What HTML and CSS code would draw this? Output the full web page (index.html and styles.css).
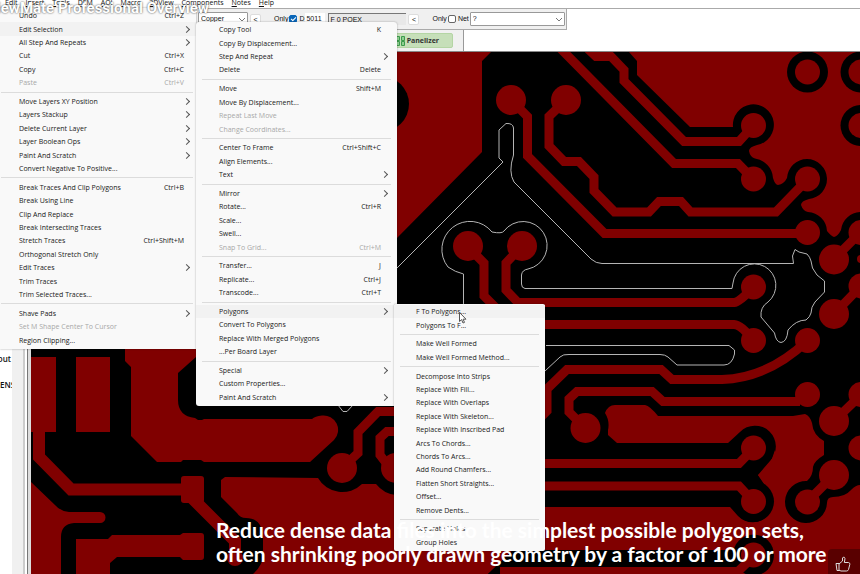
FILE: index.html
```
<!DOCTYPE html>
<html lang="en">
<head>
<meta charset="utf-8">
<title>ViewMate Professional Overview</title>
<link rel="stylesheet" href="styles.css">
</head>
<body>
<div class="app">
  <nav class="menubar">
    <a href="#">Edit</a><a href="#"><u>I</u>nsert</a><a href="#"><u>T</u>ools</a><a href="#"><u>D</u>FM</a><a href="#"><u>A</u>OI</a><a href="#"><u>M</u>acro</a><a href="#"><u>3</u>DView</a><a href="#"><u>C</u>omponents</a><a href="#"><u>N</u>otes</a><a href="#"><u>H</u>elp</a>
  </nav>
  <div class="bars">
    <div class="toolbar">
      <select class="layer" aria-label="Layer"><option>Copper</option></select>
      <button class="prev" aria-label="Previous layer">&lt;</button>
      <label class="check">Only<input type="checkbox" checked></label>
      <label class="dcode">D<input type="text" value="5011"></label>
      <input class="shape" type="text" value="F 0 POEX" aria-label="Shape" readonly>
      <button class="prev" aria-label="Previous shape">&lt;</button>
      <label class="check">Only<input type="checkbox"></label>
      <label class="net">Net<select><option>?</option></select></label>
    </div>
    <div class="tabs">
      <button class="panelizer">
        <svg viewBox="0 0 9 10" aria-hidden="true"><path d="M.5.5h3v4h-3zM5.500.5h3v4h-3zM.5 5.500h3v4h-3zM5.500 5.500h3v4h-3z"/></svg>
        Panelizer
      </button>
    </div>
  </div>
  <main class="work">
    <aside class="pane"><span class="tail">Layout</span><span>ENS</span></aside>
    <div class="splitter"></div>
    <svg class="board" viewBox="31 52 829 522" preserveAspectRatio="xMinYMin slice" role="img" aria-label="Board artwork">
      <g class="copper">
        <path d="M397 51H492L482 61V152L397 238Z"/>
        <path d="M629 51V52L637 61V75L690 127H733A20.500 20.500 0 1 1 757 145Q749 147 749 151Q750 157 755 158.500A21 21 0 0 1 773 178Q775 185 778 185Q784 184 787 178A20 20 0 1 1 809 199Q801 201 801 205Q803 211 808 212A20 20 0 0 1 827 231Q831 236 834 237Q838 236 841 230A20 20 0 0 1 861 212V51Z"/>
        <path d="M125 349V361L131 367V436L157 462H181L183 460H201L204 462H310L334 440A14.500 14.500 0 0 0 322 415.500Q315 416 312 419H204L202 420H198L195 418Q178 416 178 400V373L196 357V349Z"/>
        <path d="M31 357H56V432H31ZM76 357H110V432H76Z"/>
        <rect x="181" y="476" width="23" height="27" rx="3"/>
        <path d="M31 482L55 505Q60 511 69 512H100A5.500 5.500 0 0 1 100 523H74Q61 524 61 537V574H31Z"/>
        <path d="M76 539H108L112 535H180L183 533H201Q204 533 204 536V557Q204 560 201 560H183L180 557H117L110 563V574H76Z"/>
        <path d="M221 480L225 477L318 478A28 28 0 0 0 362 484H376Q384 494 396 495H410V507H730L738 516A20 20 0 0 0 768 515V490L758 475L770 461A20 20 0 0 0 740 432L728 443H617L608 435V430Q610 421 605 413Q608 405 615 405H645Q650 406 658 416H793L805 414Q810 416 812 423Q813 435 824 441V455Q814 461 813 467Q813 476 807 481A21 21 0 1 0 827 503Q827 497 833 497Q845 497 851 490Q856 485 860 485V574H735V550H513L488 574H253Q263 565 263 555V535Q261 518 246 518Q240 518 237 513L221 497Z"/>
        <path d="M768 470L758 475L768 488L775 500V450Z"/>
      </g>
      <g class="gap">
        <circle cx="381" cy="104" r="28"/>
        <circle cx="807.500" cy="72" r="20.500"/>
        <circle cx="861" cy="72" r="20.500"/>
        <circle cx="861" cy="125.500" r="20.500"/>
        <circle cx="753.500" cy="448" r="20.500"/>
        <circle cx="753.500" cy="501.500" r="20.500"/>
        <circle cx="753.500" cy="555" r="20.500"/>
        <path d="M513 550H742V574H488Z"/>
      </g>
      <g class="trace">
        <path d="M511 100L527.500 116.500V156L604.500 233.500H807"/>
        <path d="M566 100L549 116.500V146L564 161.500H579L594 177V191L614.500 212H649L659 201.500H681L690.500 212H776L807 180"/>
        <path d="M560 48L674 163.500H738L753 179"/>
        <path d="M588 49L596 56.500H611L624 70V81L684 141.500H739L753 126"/>
        <path d="M834 259L861 232M834 314L861 286M834 421L861 395M834 475L807 502"/>
        <path d="M467 246L484 263V296L500 312M522 246L506 263V290L518 302.500H734Q740 302 753 287"/>
        <path d="M540 324.500H734Q742 325 753 341"/>
        <path d="M535 423L547 411V389L567 369.500H661L672 379.500H722Q768 378 807 341"/>
        <path d="M585 428V428L569 412V399L577 391.500H652L663 401.500H800"/>
        <path d="M540 463.500H739L753 449M540 486H739L753 501M500 571.500H738L753 557"/>
        <path d="M342 468L358 453V432L378 411.500H400M390 468L380 455V438L387 431.500H400"/>
        <path class="wide" d="M39 430V457L71 489.500H186M188 494L235 541V558"/>
      </g>
      <g class="copper">
        <circle cx="807.500" cy="72" r="12.500"/><circle cx="861" cy="72" r="12.500"/><circle cx="861" cy="125.500" r="12.500"/>
        <circle cx="511" cy="100" r="15"/><circle cx="566" cy="100" r="15"/>
        <circle cx="468" cy="246" r="15"/><circle cx="522" cy="246" r="15"/>
        <circle cx="753.500" cy="125.500" r="12.500"/><circle cx="753.500" cy="179" r="12.500"/>
        <circle cx="807.500" cy="179" r="12.500"/><circle cx="807.500" cy="232.500" r="12.500"/>
        <circle cx="861" cy="232.500" r="12.500"/><circle cx="861" cy="286" r="12.500"/><circle cx="861" cy="259" r="4"/>
        <circle cx="834" cy="259.500" r="15"/><circle cx="834" cy="314" r="15"/>
        <circle cx="753.500" cy="287" r="12.500"/><circle cx="753.500" cy="340.500" r="12.500"/><circle cx="807.500" cy="340.500" r="12.500"/>
        <circle cx="807.500" cy="394.500" r="12.500"/><circle cx="861" cy="394.500" r="12.500"/><circle cx="861" cy="448" r="12.500"/>
        <circle cx="834" cy="421" r="15"/><circle cx="834" cy="475" r="15"/><circle cx="807.500" cy="502" r="12.500"/>
        <circle cx="585.500" cy="428" r="15"/>
        <circle cx="753.500" cy="448" r="12.500"/><circle cx="753.500" cy="501.500" r="12.500"/><circle cx="753.500" cy="555" r="12.500"/>
        <circle cx="342" cy="468" r="15"/><circle cx="396" cy="468" r="15"/><circle cx="235" cy="558" r="8"/>
      </g>
      <g class="outline">
        <path d="M397 268L503 162L499 158V130L506 123.500Q513 123 513.500 128V155Q508 172 514 182L591 259Q596 263.500 602 263.500H793.500L792.500 256L795 249.500L799 252L807 254Q810 257 811 261Q811 268 817 275L824.500 281V292L815 302Q811 307 811 313Q810 317 806 320Q796 320 788 330Q787 342 781 342.500Q776 342 774.500 333L761 317Q760 307 768 302A21.500 21.500 0 1 0 733 283L732 288.500H525Q521.500 288 521.500 284V275Q522 270 528 269A24 24 0 1 0 504 231Q502 234 492 232A27 27 0 1 0 448 267Q455 272 463.500 274V306"/>
        <path d="M546 345.500H729L734.500 350V354Q732 365 724 365H677L668 357Q665 354.500 660 354.500H569Q563 354 560 357L545 371"/>
        <path d="M338 405L343 411.500H347L353 405"/>
      </g>
    </svg>
  </main>
</div>

<ul class="menu edit-menu">
  <li><button>Undo<kbd>Ctrl+Z</kbd></button></li>
  <li><button class="sub active">Edit Selection</button></li>
  <li><button class="sub">All Step And Repeats</button></li>
  <li><button>Cut<kbd>Ctrl+X</kbd></button></li>
  <li><button>Copy<kbd>Ctrl+C</kbd></button></li>
  <li><button disabled>Paste<kbd>Ctrl+V</kbd></button></li>
  <li class="sep"></li>
  <li><button class="sub">Move Layers XY Position</button></li>
  <li><button class="sub">Layers Stackup</button></li>
  <li><button class="sub">Delete Current Layer</button></li>
  <li><button class="sub">Layer Boolean Ops</button></li>
  <li><button class="sub">Paint And Scratch</button></li>
  <li><button>Convert Negative To Positive...</button></li>
  <li class="sep"></li>
  <li><button>Break Traces And Clip Polygons<kbd>Ctrl+B</kbd></button></li>
  <li><button>Break Using Line</button></li>
  <li><button>Clip And Replace</button></li>
  <li><button>Break Intersecting Traces</button></li>
  <li><button>Stretch Traces<kbd>Ctrl+Shift+M</kbd></button></li>
  <li><button>Orthogonal Stretch Only</button></li>
  <li><button class="sub">Edit Traces</button></li>
  <li><button>Trim Traces</button></li>
  <li><button>Trim Selected Traces...</button></li>
  <li class="sep"></li>
  <li><button class="sub">Shave Pads</button></li>
  <li><button disabled>Set M Shape Center To Cursor</button></li>
  <li><button>Region Clipping...</button></li>
</ul>

<ul class="menu selection-menu">
  <li><button>Copy Tool<kbd>K</kbd></button></li>
  <li><button>Copy By Displacement...</button></li>
  <li><button class="sub">Step And Repeat</button></li>
  <li><button>Delete<kbd>Delete</kbd></button></li>
  <li class="sep"></li>
  <li><button>Move<kbd>Shift+M</kbd></button></li>
  <li><button>Move By Displacement...</button></li>
  <li><button disabled>Repeat Last Move</button></li>
  <li><button disabled>Change Coordinates...</button></li>
  <li class="sep"></li>
  <li><button>Center To Frame<kbd>Ctrl+Shift+C</kbd></button></li>
  <li><button>Align Elements...</button></li>
  <li><button class="sub">Text</button></li>
  <li class="sep"></li>
  <li><button class="sub">Mirror</button></li>
  <li><button>Rotate...<kbd>Ctrl+R</kbd></button></li>
  <li><button>Scale...</button></li>
  <li><button>Swell...</button></li>
  <li><button disabled>Snap To Grid...<kbd>Ctrl+M</kbd></button></li>
  <li class="sep"></li>
  <li><button>Transfer...<kbd>J</kbd></button></li>
  <li><button>Replicate...<kbd>Ctrl+J</kbd></button></li>
  <li><button>Transcode...<kbd>Ctrl+T</kbd></button></li>
  <li class="sep"></li>
  <li><button class="sub active">Polygons</button></li>
  <li><button>Convert To Polygons</button></li>
  <li><button>Replace With Merged Polygons</button></li>
  <li><button>...Per Board Layer</button></li>
  <li class="sep"></li>
  <li><button class="sub">Special</button></li>
  <li><button>Custom Properties...</button></li>
  <li><button class="sub">Paint And Scratch</button></li>
</ul>

<ul class="menu polygon-menu">
  <li><button class="active">F To Polygons...</button></li>
  <li><button>Polygons To F...</button></li>
  <li class="sep"></li>
  <li><button>Make Well Formed</button></li>
  <li><button>Make Well Formed Method...</button></li>
  <li class="sep"></li>
  <li><button>Decompose Into Strips</button></li>
  <li><button>Replace With Fill...</button></li>
  <li><button>Replace With Overlaps</button></li>
  <li><button>Replace With Skeleton...</button></li>
  <li><button>Replace With Inscribed Pad</button></li>
  <li><button>Arcs To Chords...</button></li>
  <li><button>Chords To Arcs...</button></li>
  <li><button>Add Round Chamfers...</button></li>
  <li><button>Flatten Short Straights...</button></li>
  <li><button>Offset...</button></li>
  <li><button>Remove Dents...</button></li>
  <li class="sep"></li>
  <li><button>Separate Holes</button></li>
  <li><button>Group Holes</button></li>
</ul>

<svg class="cursor" viewBox="0 0 8 12" aria-hidden="true"><path d="M.5.5V9.500L2.600 7.600L4 11L5.500 10.400L4.100 7.200H7Z"/></svg>
<h1 class="video-title">ViewMate Professional Overview</h1>
<p class="caption">Reduce dense data files into the simplest possible polygon sets,<br>often shrinking poorly drawn geometry by a factor of 100 or more</p>
<button class="like" aria-label="Like"><svg viewBox="0 0 16 16"><path d="M1 7.500H4V14.500H2ZM4 8L7.500 5V2Q8 .8 9.300 1.300Q10.300 2 9.800 4L9.300 6.500H13.500Q15.300 7 14.800 8.500L13.500 13.500Q13 15 11.500 15H6L4 14.200"/></svg></button>
</body>
</html>
```
FILE: styles.css
```
* { box-sizing: border-box; }

body {
  margin: 0;
  height: 100vh;
  overflow: hidden;
  background: #fff;
  color: #181818;
  font: 7px/13px "Open Sans", "Noto Sans", sans-serif;
}

button, input, select { font: inherit; color: inherit; margin: 0; }

.app { display: flex; flex-direction: column; height: 100%; }

.menubar {
  display: flex;
  align-items: flex-end;
  gap: 8px;
  height: 9px;
  padding-left: 5px;
  border-bottom: 1px solid #aaa;
  background: #fff;
}
.menubar a { color: #111; text-decoration: none; line-height: 10px; }

.bars { display: flex; flex-direction: column; align-items: flex-start; border-bottom: 1px solid #888; }

.toolbar {
  display: flex;
  align-items: center;
  height: 21px;
  padding: 0 1px 0 198px;
  background: #f0f0f0;
  border-right: 1px solid #aaa;
  border-bottom: 1px solid #aaa;
  font: 7px/12px "Liberation Sans", sans-serif;
  color: #111;
}
.toolbar select {
  appearance: none;
  height: 14px;
  padding: 0 2px;
  border: 1px solid #999;
  border-radius: 1px;
  background-color: #fff;
  background-image: linear-gradient(45deg, transparent 45%, #777 45% 60%, transparent 60%), linear-gradient(-45deg, transparent 45%, #777 45% 60%, transparent 60%);
  background-size: 3px 3px;
  background-position: right 5px center, right 2px center;
  background-repeat: no-repeat;
}
.toolbar .layer { width: 50px; }
.toolbar .prev {
  width: 11px;
  height: 11px;
  margin: 0 2px;
  padding: 0;
  border: 1px solid #ddd;
  border-radius: 2px;
  background: #fff;
  line-height: 9px;
}
.check, .dcode, .net { display: flex; align-items: center; gap: 1px; }
.check { margin-left: 11px; }
.check input {
  appearance: none;
  width: 8px;
  height: 8px;
  border: 1px solid #666;
  border-radius: 2px;
  background: #fff;
}
.check input:checked { background: #0a66b8; border-color: #0a66b8; }
.check input:checked::after {
  content: "";
  display: block;
  width: 4px;
  height: 2px;
  margin: 1px;
  border: solid #fff;
  border-width: 0 0 1px 1px;
  transform: rotate(-45deg);
}
.dcode { margin-left: 2px; }
.dcode input { width: 20px; height: 12px; padding: 0 1px; border: 0; background: #fff; }
.shape { width: 78px; height: 12px; margin-left: 3px; padding: 0 1px; border: 1px solid #777; border-width: 1px 0 0 1px; background: #e8e8e8; }
.net { margin-left: 2px; }
.net select { width: 95px; }

.tabs {
  display: flex;
  justify-content: flex-end;
  align-items: center;
  width: 464px;
  height: 21px;
  padding-right: 10px;
  background: #f0f0f0;
  border-right: 1px solid #999;
}
.panelizer {
  display: flex;
  align-items: center;
  gap: 2px;
  height: 15px;
  padding: 0 13px 0 7px;
  border: 1px solid #b4d5a4;
  border-radius: 2px;
  background: #c6dfb9;
  font-weight: 700;
  color: #333;
}
.panelizer svg { width: 9px; height: 10px; fill: #8fce91; stroke: #3c9a4c; }

.work { display: flex; flex: 1; min-height: 0; }
.pane {
  display: flex;
  flex-direction: column;
  gap: 13px;
  width: 12px;
  padding: 300px 1px 0 0;
  overflow: hidden;
  background: #fff;
  color: #111;
  font: 600 8px/13px "Open Sans", sans-serif;
}
.pane .tail { align-self: flex-end; }
.splitter { width: 19px; background: #fff; border-left: 11px solid #f0f0f0; border-right: 3px solid #ddd; box-shadow: inset -1px 0 #777, inset 2px 0 #ccc; }
.board { flex: 1; min-width: 0; height: 100%; background: #000; }
.copper { fill: #800000; }
.gap { fill: #000; }
.trace { fill: none; stroke: #800000; stroke-width: 9; }
.trace .wide { stroke-width: 12; }
.outline { fill: none; stroke: #b4b4b4; stroke-width: 1; }

/* Drop-down menus lie over the board; rows and separators share the height 5:2 */
.menu {
  position: absolute;
  display: flex;
  flex-direction: column;
  margin: 0;
  padding: 1px 0 2px;
  list-style: none;
  background: #f9f9f9;
  box-shadow: 0 0 2px rgba(0, 0, 0, .35);
}
.menu li { display: flex; flex: 5 1 0; min-height: 0; }
.menu .sep { flex-grow: 2; align-items: center; padding: 0 3px 0 1px; }
.menu .sep::before { content: ""; flex: 1; height: 1px; background: #dcdcdc; }
.menu button {
  display: flex;
  flex: 1;
  align-items: center;
  justify-content: space-between;
  padding: 0 12px 0 19px;
  border: 0;
  background: none;
  line-height: 13px;
  white-space: nowrap;
}
.menu .active { background: #f2f2f2; }
.menu button:disabled { color: #a8a8a8; }
.menu kbd { font: inherit; }
.menu .sub { padding-right: 7px; }
.menu .sub::after {
  content: "";
  width: 4px;
  height: 4px;
  border: solid #555;
  border-width: 1px 1px 0 0;
  transform: rotate(45deg);
}
.edit-menu { left: 0; top: 8px; width: 196px; height: 341px; }
.selection-menu { left: 196px; top: 22px; width: 201px; height: 384px; border-radius: 3px; }
.selection-menu button { padding: 0 16px 0 23px; }
.selection-menu .sub { padding-right: 10px; }
.selection-menu .sep { padding: 0 6px; }
.polygon-menu { left: 394px; top: 304px; width: 151px; height: 247px; border-radius: 2px; }
.polygon-menu button { padding: 0 5px 0 22px; }
.polygon-menu .sep { padding: 0 6px; }

.cursor { position: absolute; left: 459px; top: 312px; width: 8px; height: 12px; fill: #fff; stroke: #555; stroke-width: 1; }

.video-title {
  position: absolute;
  left: -13px;
  top: -1px;
  margin: 0;
  color: #fff;
  font: 700 15px/18px Roboto, sans-serif;
  text-shadow: 0 0 2px rgba(0, 0, 0, .8);
  white-space: nowrap;
}

.caption {
  position: absolute;
  left: 216px;
  bottom: 8px;
  margin: 0;
  color: #fff;
  font: 700 21px/24px Lato, sans-serif;
  white-space: nowrap;
}

.like {
  position: absolute;
  right: 0;
  bottom: 0;
  display: grid;
  place-items: end center;
  width: 32px;
  height: 25px;
  padding: 0 2px 2px 0;
  border: 0;
  border-radius: 4px 0 0 0;
  background: rgba(0, 0, 0, .3);
}
.like svg { width: 16px; height: 16px; fill: none; stroke: #ddd; stroke-width: 1; }
```
